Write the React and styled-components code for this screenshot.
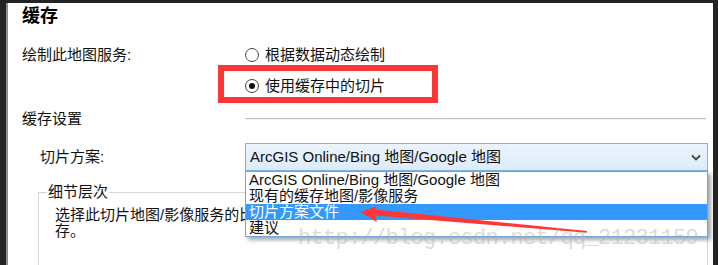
import React from 'react'
import styled, { createGlobalStyle } from 'styled-components'

const GlobalStyle = createGlobalStyle`
  html, body {
    margin: 0;
    padding: 0;
    background: #232323;
  }
  body {
    font-family: "Liberation Sans", "Noto Sans CJK SC", sans-serif;
  }
`

const Frame = styled.div`
  position: relative;
  width: 718px;
  height: 265px;
  box-sizing: border-box;
  padding: 3px 5px 0 6px;
  overflow: hidden;
`

const Panel = styled.div`
  height: 100%;
  box-sizing: border-box;
  background: #fff;
  border-left: 2px solid #8e8e8e;
  padding: 1px 5px 0 14px;
  color: #111;
  font-size: 15px;
  overflow: hidden;
`

const Title = styled.h2`
  margin: 0;
  font-size: 18px;
  font-weight: 700;
  line-height: 24px;
  color: #000;
`

const Row = styled.div`
  display: grid;
  grid-template-columns: 223px 1fr;
  align-items: ${p => (p.$top ? 'start' : 'center')};
  margin-top: ${p => p.$gap}px;
`

const Label = styled.div`
  line-height: 20px;
  padding-left: ${p => p.$indent || 0}px;
  white-space: nowrap;
`

const RadioGroup = styled.div`
  display: flex;
  flex-direction: column;
  gap: 11px;
`

const RadioRow = styled.label`
  position: relative;
  display: flex;
  align-items: center;
  gap: 6px;
  height: 20px;
  line-height: 20px;
`

const RadioDot = styled.span`
  position: relative;
  width: 14px;
  height: 14px;
  box-sizing: border-box;
  border-radius: 50%;
  border: 1.5px solid #444;
  background: #fff;
  flex: none;

  &::after {
    content: '';
    display: ${p => (p.$checked ? 'block' : 'none')};
    position: absolute;
    left: 2.5px;
    top: 2.5px;
    width: 6px;
    height: 6px;
    border-radius: 50%;
    background: #111;
  }
`

const Annotation = styled.span`
  position: absolute;
  left: -27px;
  top: -11px;
  width: 220px;
  height: 38px;
  box-sizing: border-box;
  border: 6px solid #ff3636;
  pointer-events: none;
`

const Rule = styled.div`
  height: 1px;
  margin-right: 2px;
  background: #c2c2c2;
  border-bottom: 1px solid #f1f1f1;
`

const ComboWrap = styled.div`
  position: relative;
`

const Combo = styled.div`
  height: 28px;
  box-sizing: border-box;
  border: 1px solid #7eb4ea;
  background: linear-gradient(#ecf4fc, #dcecfc);
  display: flex;
  align-items: center;
  justify-content: space-between;
  padding: 0 6px 0 4px;
  line-height: 20px;
  white-space: nowrap;
`

const List = styled.ul`
  position: absolute;
  z-index: 2;
  top: 28px;
  left: 0;
  right: 0;
  margin: 0;
  padding: 0;
  list-style: none;
  background: #fff;
  border: 1px solid #6ea5df;
  box-shadow: 3px 3px 4px rgba(0, 0, 0, 0.35);
`

const Item = styled.li`
  height: 16px;
  line-height: 16px;
  padding-left: 3px;
  white-space: nowrap;
  background: ${p => (p.$active ? '#3399ff' : '#fff')};
  color: ${p => (p.$active ? '#fff' : '#111')};
`

const Group = styled.fieldset`
  margin: 11px 0 0 16px;
  padding: 0 0 0 8px;
  border: 1px solid #d6d6d6;
  height: 120px;
  min-width: 0;
`

const Legend = styled.legend`
  padding: 0 1px;
  line-height: 20px;
`

const Desc = styled.p`
  margin: 5px 0 0 8px;
  line-height: 16px;
  white-space: nowrap;
  overflow: hidden;
`

const Overlay = styled.svg`
  position: absolute;
  left: 0;
  top: 0;
  z-index: 3;
  pointer-events: none;
`

const Watermark = styled.div`
  position: absolute;
  left: 298px;
  top: 226px;
  z-index: 3;
  font-family: "Liberation Mono", monospace;
  font-size: 22px;
  letter-spacing: -0.7px;
  line-height: 26px;
  color: rgba(175, 175, 175, 0.45);
  pointer-events: none;
  white-space: nowrap;
`

const schemes = [
  'ArcGIS Online/Bing 地图/Google 地图',
  '现有的缓存地图/影像服务',
  '切片方案文件',
  '建议',
]

const App = () => {
  const showItems = schemes.map((s, index) => (
    <Item key={index} $active={index === 2}>{s}</Item>
  ))

  return (
    <Frame>
      <GlobalStyle />
      <Panel>
        <Title>缓存</Title>

        <Row $gap={17} $top>
          <Label>绘制此地图服务:</Label>
          <RadioGroup>
            <RadioRow>
              <RadioDot />
              根据数据动态绘制
            </RadioRow>
            <RadioRow>
              <RadioDot $checked />
              使用缓存中的切片
              <Annotation />
            </RadioRow>
          </RadioGroup>
        </Row>

        <Row $gap={13}>
          <Label>缓存设置</Label>
          <Rule />
        </Row>

        <Row $gap={14}>
          <Label $indent={18}>切片方案:</Label>
          <ComboWrap>
            <Combo>
              <span>{schemes[0]}</span>
              <svg width="10" height="7" viewBox="0 0 10 7">
                <path d="M1 1.5 L5 5.5 L9 1.5" fill="none" stroke="#444" strokeWidth="1.8" />
              </svg>
            </Combo>
            <List>{showItems}</List>
          </ComboWrap>
        </Row>

        <Group>
          <Legend>细节层次</Legend>
          <Desc>
            选择此切片地图/影像服务的比例级别。服务器将按照这些比例级别生成切片缓
            <br />
            存。
          </Desc>
        </Group>
      </Panel>

      <Overlay width="718" height="265" viewBox="0 0 718 265">
        <polygon
          points="360,212 377,206 375,209.5 587,231 587,232.8 375,215.5 377,222"
          fill="#ff3636"
        />
      </Overlay>
      <Watermark>http://blog.csdn.net/qq_21231159</Watermark>
    </Frame>
  )
}

export default App
